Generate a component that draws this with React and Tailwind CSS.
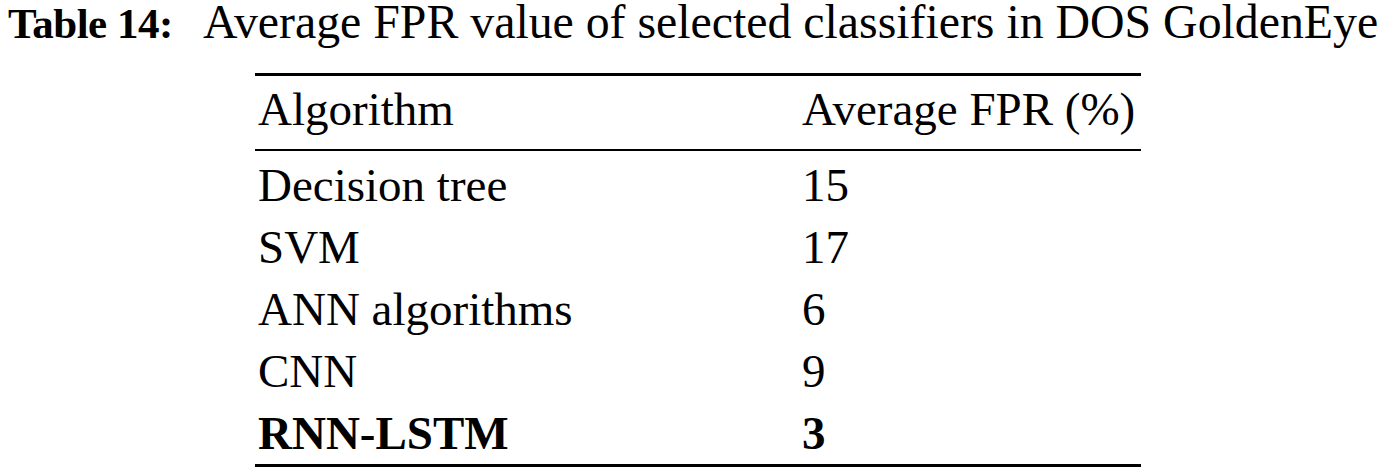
const rows = [
  { name: "Decision tree", fpr: "15" },
  { name: "SVM", fpr: "17" },
  { name: "ANN algorithms", fpr: "6" },
  { name: "CNN", fpr: "9" },
  { name: "RNN-LSTM", fpr: "3", best: true },
];

export default function App() {
  return (
    <div className="w-[1383px] h-[475px] bg-white text-black font-[family-name:Liberation_Serif,Times_New_Roman,serif]">
      <div className="pl-[8px] text-[47.8px] leading-[44px] whitespace-nowrap">
        <span className="inline-block w-[195px] font-bold text-[43px] leading-[40px] tracking-[-0.5px]">Table 14:</span>
        <span>Average FPR value of selected classifiers in DOS GoldenEye</span>
      </div>

      <div className="ml-[255px] mt-[29px] w-[886px] border-t-[3px] border-b-[3px] border-black text-[47px] whitespace-nowrap">
        <div className="grid grid-cols-[547px_1fr] pt-[2px] pb-[9px] leading-[62px] border-b-2 border-black">
          <div className="pl-[3px]">Algorithm</div>
          <div>Average FPR (%)</div>
        </div>
        <div className="pt-[3px]">
          {rows.map((r) => (
            <div
              key={r.name}
              className={`grid grid-cols-[547px_1fr] leading-[62px] ${r.best ? "font-bold" : ""}`}
            >
              <div className="pl-[3px]">{r.name}</div>
              <div>{r.fpr}</div>
            </div>
          ))}
        </div>
      </div>
    </div>
  );
}
